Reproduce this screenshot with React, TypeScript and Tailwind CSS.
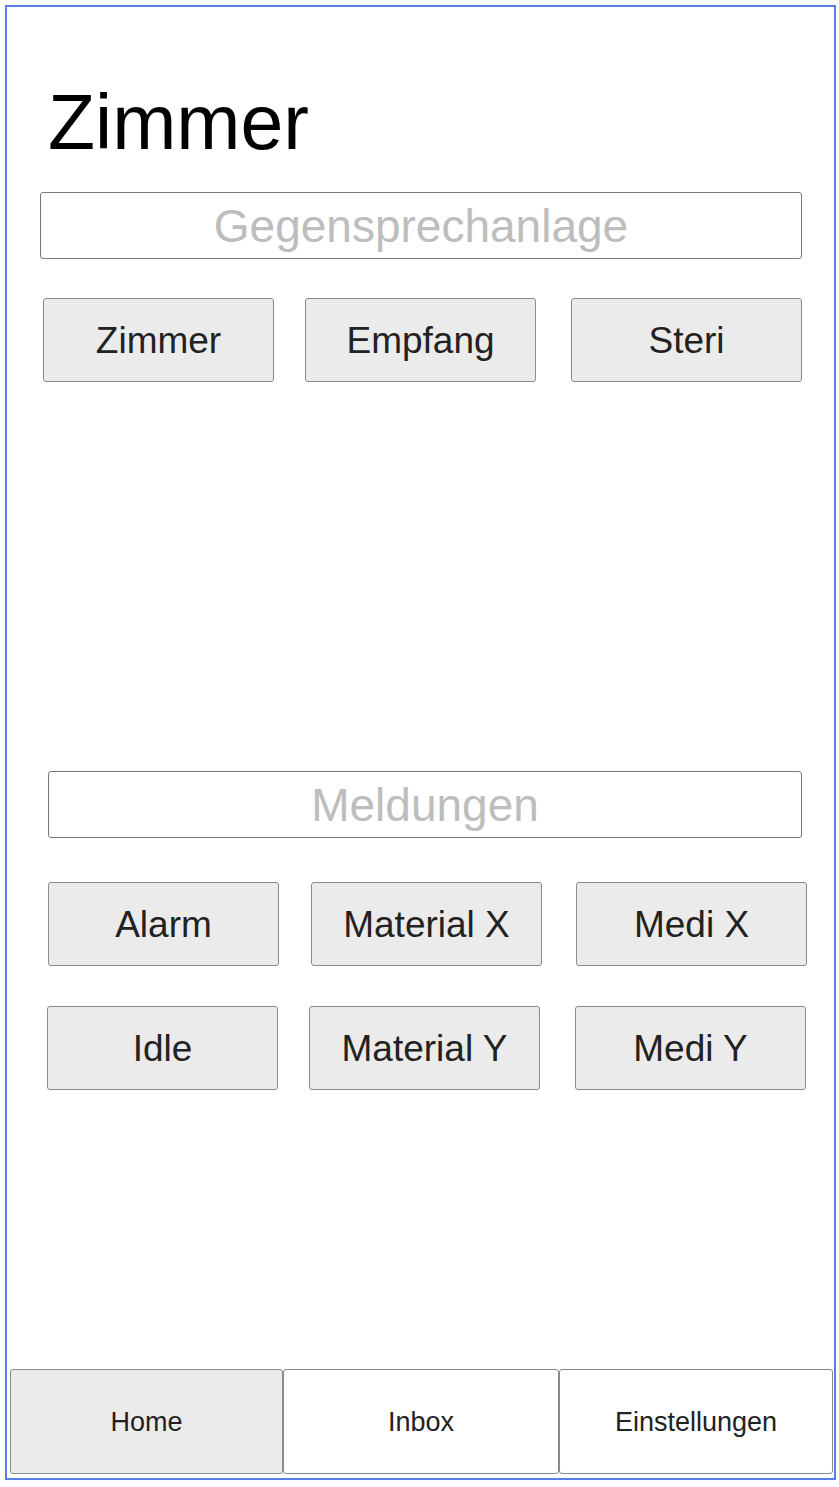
import React from 'react';

const font = { fontFamily: '"Liberation Sans", Arial, sans-serif' };

function Btn({ label, className }: { label: string; className: string }) {
  return (
    <div
      className={`w-[231px] h-[84px] flex items-center justify-center pt-[1px] bg-[#ebebeb] border border-[#8a8a8a] rounded-[3px] text-[37px] leading-none text-[#222] ${className}`}
    >
      {label}
    </div>
  );
}

function NavBtn({ label, active, className }: { label: string; active?: boolean; className: string }) {
  return (
    <div
      className={`h-[105px] flex items-center justify-center pt-[2px] border border-[#8a8a8a] rounded-[3px] text-[27px] leading-none text-[#222] ${
        active ? 'bg-[#ebebeb]' : 'bg-white'
      } ${className}`}
    >
      {label}
    </div>
  );
}

export default function App() {
  return (
    <div className="bg-white w-[839px] h-[1487px] p-[5px]" style={font}>
      <div className="w-[831px] h-[1475px] border-2 border-[#5b7de6] flex flex-col">
        <h1 className="mt-[77px] ml-[41px] text-[77px] leading-none text-black">Zimmer</h1>

        <div className="mt-[31px] ml-[33px] w-[762px] h-[67px] flex items-center justify-center border border-[#777] rounded-[3px] text-[46px] leading-none text-[#bdbdbd]">
          Gegensprechanlage
        </div>

        <div className="mt-[39px] flex">
          <Btn label="Zimmer" className="ml-[36px]" />
          <Btn label="Empfang" className="ml-[31px]" />
          <Btn label="Steri" className="ml-[35px]" />
        </div>

        <div className="mt-[389px] ml-[41px] w-[754px] h-[67px] flex items-center justify-center border border-[#777] rounded-[3px] text-[46px] leading-none text-[#bdbdbd]">
          Meldungen
        </div>

        <div className="mt-[44px] flex">
          <Btn label="Alarm" className="ml-[41px]" />
          <Btn label="Material X" className="ml-[32px]" />
          <Btn label="Medi X" className="ml-[34px]" />
        </div>

        <div className="mt-[40px] flex">
          <Btn label="Idle" className="ml-[40px] h-[83px]" />
          <Btn label="Material Y" className="ml-[31px] h-[83px]" />
          <Btn label="Medi Y" className="ml-[35px] h-[83px]" />
        </div>

        <div className="mt-auto mb-[4px] flex">
          <NavBtn label="Home" active className="ml-[3px] w-[273px]" />
          <NavBtn label="Inbox" className="w-[276px]" />
          <NavBtn label="Einstellungen" className="w-[274px]" />
        </div>
      </div>
    </div>
  );
}
